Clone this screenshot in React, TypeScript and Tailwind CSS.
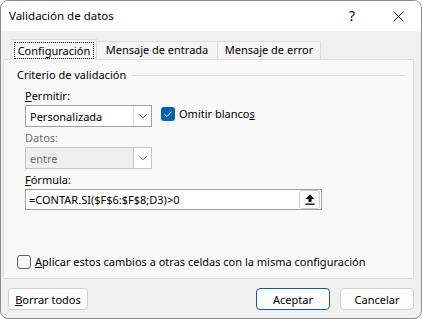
import React from "react";

const Chevron = ({ color = "#5f5f5f" }: { color?: string }) => (
  <svg width="10" height="6" viewBox="0 0 10 6">
    <path d="M1 1 L5 5 L9 1" fill="none" stroke={color} strokeWidth="1" />
  </svg>
);

const Combo = ({ value, disabled }: { value: string; disabled?: boolean }) => (
  <div
    className={`flex h-[22px] w-[127px] border ${
      disabled ? "border-[#c5c5c5] bg-[#efefef] text-[#6d6d6d]" : "border-[#a0a0a0] bg-white text-black"
    }`}
  >
    <div className="flex flex-1 items-center pl-[4px] leading-none">{value}</div>
    <div className={`flex w-[18px] items-center justify-center border-l ${disabled ? "border-[#c5c5c5] bg-white" : "border-[#dcdcdc] bg-white"}`}>
      <Chevron color={disabled ? "#8a8a8a" : "#5f5f5f"} />
    </div>
  </div>
);

const Button = ({ children, primary }: { children: React.ReactNode; primary?: boolean }) => (
  <button
    className={`flex h-[22px] w-[74px] items-center justify-center rounded-[4px] border bg-[#fdfdfd] text-[11px] leading-none ${
      primary ? "border-[#005fb8]" : "border-[#d0d0d0]"
    }`}
  >
    {children}
  </button>
);

export default function App() {
  return (
    <div className="flex h-[319px] w-[422px] flex-col overflow-hidden rounded-[8px] border border-[#8c8c8c] bg-[#f0f0f0] font-['Noto_Sans',sans-serif] text-[11px] text-black">
      {/* title bar */}
      <div className="flex h-[30px] shrink-0 items-center bg-white pl-[8px]">
        <span className="text-[11.5px] leading-none">Validación de datos</span>
        <span className="ml-auto mr-[38px] text-[14px] leading-none">?</span>
        <svg className="mr-[17px]" width="11" height="11" viewBox="0 0 11 11">
          <path d="M0.5 0.5 L10.5 10.5 M10.5 0.5 L0.5 10.5" stroke="#1a1a1a" strokeWidth="1" />
        </svg>
      </div>

      {/* body */}
      <div className="flex flex-1 flex-col pl-[2px] pr-[7px] pt-[8px]">
        {/* tabs */}
        <div className="relative z-10 flex h-[20px] items-end pl-[8px]">
          <div className="mb-[-1px] flex h-[21px] w-[86px] items-center justify-center border border-b-0 border-[#dcdcdc] bg-[#f9f9f9]">
            <span className="border border-dotted border-black px-[3px] leading-[15px]">Configuración</span>
          </div>
          <div className="flex h-[18px] w-[121px] items-center justify-center border border-b-0 border-l-0 border-[#dcdcdc] bg-[#f5f5f5]">
            Mensaje de entrada
          </div>
          <div className="flex h-[18px] w-[103px] items-center justify-center border border-b-0 border-l-0 border-[#dcdcdc] bg-[#f5f5f5]">
            Mensaje de error
          </div>
        </div>

        {/* panel */}
        <div className="flex h-[220px] flex-col border border-[#dcdcdc] bg-[#f9f9f9] pl-[13px] pr-[7px] pt-[7px]">
          <div className="flex items-center gap-[6px]">
            <span className="leading-[16px]">Criterio de validación</span>
            <div className="h-px flex-1 bg-[#dcdcdc]" />
          </div>

          <div className="flex flex-col pl-[8px]">
            <span className="mt-[5px] leading-[16px]">
              <span className="underline">P</span>ermitir:
            </span>
            <div className="mt-[1px] flex items-center">
              <Combo value="Personalizada" />
              <div className="ml-[9px] mt-[-4px] flex items-center gap-[4px]">
                <svg width="14" height="14" viewBox="0 0 14 14">
                  <rect x="0" y="0" width="14" height="14" rx="3" fill="#005fb8" />
                  <path d="M3.5 7.2 L6 9.6 L10.5 4.6" fill="none" stroke="white" strokeWidth="1" />
                </svg>
                <span className="leading-[16px]">
                  Omitir blanco<span className="underline">s</span>
                </span>
              </div>
            </div>

            <span className="mt-[3px] leading-[16px] text-[#6d6d6d]">Datos:</span>
            <div className="mt-[1px]">
              <Combo value="entre" disabled />
            </div>

            <span className="mt-[3px] leading-[16px]">
              <span className="underline">F</span>órmula:
            </span>
            <div className="mt-[1px] flex h-[21px] w-[297px] items-center border border-[#a0a0a0] bg-white pl-[3px] pr-[1px]">
              <span className="flex-1 leading-none">=CONTAR.SI($F$6:$F$8;D3)&gt;0</span>
              <div className="flex h-[19px] w-[21px] items-center justify-center rounded-[3px] border border-[#cfcfcf] bg-[#fbfbfb]">
                <svg width="10" height="11" viewBox="0 0 10 11">
                  <path d="M5 0.5 L9.5 5 L6.5 5 L6.5 8 L3.5 8 L3.5 5 L0.5 5 Z" fill="black" />
                  <rect x="0.5" y="9.5" width="9" height="1.3" fill="black" />
                </svg>
              </div>
            </div>
          </div>

          <div className="mt-auto mb-[8px] flex items-center gap-[4px]">
            <div className="h-[14px] w-[14px] rounded-[3px] border border-[#5f5f5f] bg-[#f6f6f6]" />
            <span className="leading-[16px]">
              <span className="underline">A</span>plicar estos cambios a otras celdas con la misma configuración
            </span>
          </div>
        </div>

        {/* buttons */}
        <div className="mt-[9px] flex items-center pl-[5px]">
          <button className="flex h-[22px] w-[80px] items-center justify-center rounded-[4px] border border-[#d0d0d0] bg-[#fdfdfd] text-[11px] leading-none">
            <span>
              <span className="underline">B</span>orrar todos
            </span>
          </button>
          <div className="ml-auto flex gap-[10px]">
            <Button primary>Aceptar</Button>
            <Button>Cancelar</Button>
          </div>
        </div>
      </div>
    </div>
  );
}
